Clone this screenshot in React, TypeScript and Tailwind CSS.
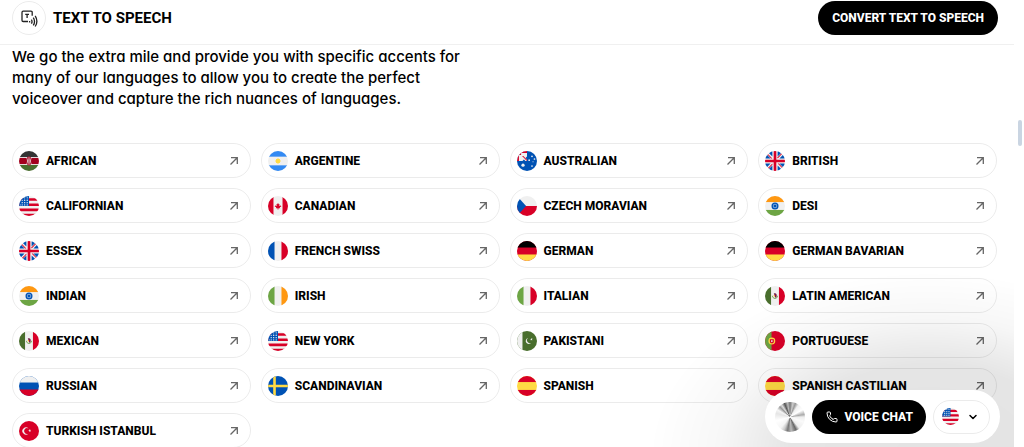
import React from 'react';
import { ChevronDown, Phone } from 'lucide-react';

type FlagCode =
    | 'ke' | 'ar' | 'au' | 'gb' | 'us' | 'ca' | 'cz' | 'in' | 'fr' | 'de' | 'ie'
    | 'it' | 'mx' | 'pk' | 'pt' | 'ru' | 'se' | 'es' | 'tr';

interface Accent {
    name: string;
    flag: FlagCode;
}

const accents: Accent[] = [
    { name: 'AFRICAN', flag: 'ke' },
    { name: 'ARGENTINE', flag: 'ar' },
    { name: 'AUSTRALIAN', flag: 'au' },
    { name: 'BRITISH', flag: 'gb' },
    { name: 'CALIFORNIAN', flag: 'us' },
    { name: 'CANADIAN', flag: 'ca' },
    { name: 'CZECH MORAVIAN', flag: 'cz' },
    { name: 'DESI', flag: 'in' },
    { name: 'ESSEX', flag: 'gb' },
    { name: 'FRENCH SWISS', flag: 'fr' },
    { name: 'GERMAN', flag: 'de' },
    { name: 'GERMAN BAVARIAN', flag: 'de' },
    { name: 'INDIAN', flag: 'in' },
    { name: 'IRISH', flag: 'ie' },
    { name: 'ITALIAN', flag: 'it' },
    { name: 'LATIN AMERICAN', flag: 'mx' },
    { name: 'MEXICAN', flag: 'mx' },
    { name: 'NEW YORK', flag: 'us' },
    { name: 'PAKISTANI', flag: 'pk' },
    { name: 'PORTUGUESE', flag: 'pt' },
    { name: 'RUSSIAN', flag: 'ru' },
    { name: 'SCANDINAVIAN', flag: 'se' },
    { name: 'SPANISH', flag: 'es' },
    { name: 'SPANISH CASTILIAN', flag: 'es' },
    { name: 'TURKISH ISTANBUL', flag: 'tr' },
];

const WHITE = '#f0f0f0';
const RED = '#d80027';
const BLUE = '#0052b4';
const GREEN = '#6da544';
const DARK_GREEN = '#496e2d';
const YELLOW = '#ffda44';
const ORANGE = '#ff9811';

const Horizontal = ({ colors, edge = 167 }: { colors: string[]; edge?: number }) => (
    <>
        <rect width="512" height="512" fill={colors[1]} />
        <rect width="512" height={edge} fill={colors[0]} />
        <rect y={512 - edge} width="512" height={edge} fill={colors[2]} />
    </>
);

const Vertical = ({ colors, edge = 167 }: { colors: string[]; edge?: number }) => (
    <>
        <rect width="512" height="512" fill={colors[1]} />
        <rect width={edge} height="512" fill={colors[0]} />
        <rect x={512 - edge} width={edge} height="512" fill={colors[2]} />
    </>
);

// One quarter of the Union Jack, turned around the centre for the other three
const UnionQuarter = ({ turn }: { turn: number }) => (
    <g transform={`rotate(${turn} 256 256)`}>
        <path d="M0 189V47l142 142zM189 0v142L47 0z" fill={BLUE} />
        <path d="M59 90l16-15 114 114h-32z" fill={RED} />
    </g>
);

const flags: Record<FlagCode, React.ReactNode> = {
    ke: (
        <>
            <rect width="512" height="512" fill={WHITE} />
            <rect width="512" height="155" fill="#333" />
            <rect y="178" width="512" height="156" fill="#a2001d" />
            <rect y="357" width="512" height="155" fill={DARK_GREEN} />
            <ellipse cx="256" cy="256" rx="62" ry="115" fill="#a2001d" />
            <path d="M256 140c-18 22-18 210 0 232 18-22 18-210 0-232z" fill={WHITE} />
            <path d="M200 185c24 40 24 102 0 142M312 185c-24 40-24 102 0 142" fill="none" stroke={WHITE} strokeWidth="20" />
        </>
    ),
    ar: (
        <>
            <Horizontal colors={['#338af3', WHITE, '#338af3']} edge={145} />
            <circle cx="256" cy="256" r="58" fill={YELLOW} />
            <path d="M256 184v144M184 256h144M205 205l102 102M307 205L205 307" stroke={YELLOW} strokeWidth="22" />
        </>
    ),
    au: (
        <>
            <rect width="512" height="512" fill={BLUE} />
            <path d="M0 0h256v256H0z" fill={WHITE} />
            <path d="M256 50H105v55H50v151H0V0h256z" fill={RED} />
            <path d="M256 140v78l-38-38zM140 256h75l-38-40z" fill={BLUE} />
            <path d="M130 130h32l94 95v31h-2z" fill={RED} />
            <circle cx="154" cy="364" r="42" fill={WHITE} />
            <circle cx="384" cy="384" r="22" fill={WHITE} />
            <circle cx="312" cy="235" r="22" fill={WHITE} />
            <circle cx="384" cy="137" r="22" fill={WHITE} />
            <circle cx="447" cy="205" r="22" fill={WHITE} />
            <circle cx="410" cy="275" r="14" fill={WHITE} />
        </>
    ),
    gb: (
        <>
            <rect width="512" height="512" fill={WHITE} />
            <UnionQuarter turn={0} />
            <UnionQuarter turn={90} />
            <UnionQuarter turn={180} />
            <UnionQuarter turn={270} />
            <path d="M222 0h68v222h222v68H290v222h-68V290H0v-68h222z" fill={RED} />
        </>
    ),
    us: (
        <>
            <rect width="512" height="512" fill={WHITE} />
            <path d="M0 56h512v66H0zM0 189h512v67H0zM0 323h512v67H0zM0 456h512v56H0z" fill={RED} />
            <rect width="256" height="256" fill={BLUE} />
            <g fill={WHITE}>
                <circle cx="210" cy="45" r="16" />
                <circle cx="145" cy="45" r="16" />
                <circle cx="210" cy="110" r="18" />
                <circle cx="145" cy="110" r="18" />
                <circle cx="82" cy="110" r="16" />
                <circle cx="210" cy="170" r="18" />
                <circle cx="145" cy="170" r="18" />
                <circle cx="82" cy="170" r="18" />
                <circle cx="210" cy="228" r="16" />
                <circle cx="145" cy="228" r="16" />
                <circle cx="82" cy="228" r="16" />
                <circle cx="28" cy="228" r="14" />
            </g>
        </>
    ),
    ca: (
        <>
            <Vertical colors={[RED, WHITE, RED]} edge={140} />
            <path
                d="M300 289l45-22-22-11v-22l-45 22 22-45h-22l-22-33-22 33h-23l23 45-45-22v22l-22 11 44 22-11 23h45v33h22v-33h45z"
                fill={RED}
            />
        </>
    ),
    cz: (
        <>
            <rect width="512" height="256" fill={WHITE} />
            <rect y="256" width="512" height="256" fill={RED} />
            <path d="M0 0l233 256L0 512z" fill={BLUE} />
        </>
    ),
    in: (
        <>
            <Horizontal colors={[ORANGE, WHITE, GREEN]} edge={155} />
            <circle cx="256" cy="256" r="90" fill={BLUE} />
            <circle cx="256" cy="256" r="58" fill="#7ba6da" />
            <circle cx="256" cy="256" r="34" fill={BLUE} />
        </>
    ),
    fr: <Vertical colors={[BLUE, WHITE, RED]} />,
    de: <Horizontal colors={['#000', RED, YELLOW]} />,
    ie: <Vertical colors={[GREEN, WHITE, ORANGE]} />,
    it: <Vertical colors={[GREEN, WHITE, RED]} />,
    mx: (
        <>
            <Vertical colors={[DARK_GREEN, WHITE, RED]} edge={155} />
            <path d="M190 250c0 90 132 90 132 0" fill="none" stroke={GREEN} strokeWidth="24" />
            <path d="M225 190c60-20 90 20 70 90l-35 20-10-50z" fill="#751a46" />
            <circle cx="240" cy="250" r="18" fill={ORANGE} />
        </>
    ),
    pk: (
        <>
            <rect width="512" height="512" fill={DARK_GREEN} />
            <rect width="140" height="512" fill={WHITE} />
            <path d="M365 300a78 78 0 1 1-75-122 62 62 0 1 0 75 122z" fill={WHITE} />
            <path d="M360 178l14 22 26-5-17 20 13 23-24-10-19 18 3-26-23-13 26-5z" fill={WHITE} />
        </>
    ),
    pt: (
        <>
            <rect width="512" height="512" fill={RED} />
            <rect width="167" height="512" fill={GREEN} />
            <circle cx="175" cy="256" r="88" fill={YELLOW} />
            <path d="M125 212h100v55c0 66-100 66-100 0z" fill={RED} />
            <path d="M155 235h40v35c0 26-40 26-40 0z" fill={WHITE} />
        </>
    ),
    ru: <Horizontal colors={[WHITE, BLUE, RED]} />,
    se: (
        <>
            <rect width="512" height="512" fill={BLUE} />
            <path d="M133 0h67v222h312v68H200v222h-67V290H0v-68h133z" fill={YELLOW} />
        </>
    ),
    es: <Horizontal colors={[RED, YELLOW, RED]} edge={155} />,
    tr: (
        <>
            <rect width="512" height="512" fill={RED} />
            <path d="M245 320a92 92 0 1 1 0-128 75 75 0 1 0 0 128z" fill={WHITE} />
            <path d="M262 206l18 25 29-9-18 25 18 25-29-9-18 24v-30l-29-10 29-10z" fill={WHITE} />
        </>
    ),
};

const Flag = ({ code, className }: { code: FlagCode; className: string }) => (
    <svg viewBox="0 0 512 512" className={`${className} shrink-0 overflow-hidden rounded-full`} aria-hidden="true">
        {flags[code]}
    </svg>
);

const SpeechIcon = () => (
    <svg viewBox="0 0 17 17" className="size-[17px]" fill="none" stroke="#222" strokeWidth="1.3" aria-hidden="true">
        <path d="M11.2 5.8V2.4c0-.8-.4-1.2-1.2-1.2H2.2C1.4 1.2 1 1.6 1 2.4v7.9c0 .8.4 1.2 1.2 1.2H7" />
        <path d="M4.2 4.4H8M6.1 4.4V8" />
        <path d="M8.6 11v1.4M10.4 9.6c.8 1.3.8 2.8 0 4.1M12.3 7.6c1.5 2.4 1.5 5.4 0 7.8M14.2 5.9c2.1 3.4 2.1 7.4 0 10.6" />
    </svg>
);

const ArrowIcon = () => (
    <svg viewBox="0 0 8 8" className="size-2 shrink-0" fill="none" stroke="#666" strokeWidth="1.3" aria-hidden="true">
        <path d="M.5 7.5l6.7-6.7M1 .7h6.3V7" />
    </svg>
);

const AccentLink: React.FC<{ accent: Accent }> = ({ accent }) => (
    <a
        href="#"
        className="flex h-[35px] items-center gap-[7px] rounded-full border border-black/8 pr-3 pl-1.5 hover:bg-gray-50"
    >
        <Flag code={accent.flag} className="size-5" />
        <span className="flex-1 text-xs font-extrabold whitespace-nowrap">{accent.name}</span>
        <ArrowIcon />
    </a>
);

const VoiceChatBar = () => (
    <div className="fixed right-6 bottom-1 flex h-[53px] items-center gap-[7px] rounded-full bg-white px-2.5">
        <div className="size-[30px] rounded-full bg-[conic-gradient(#777_0deg,#ccc_12deg,#999_22deg,#f0f0f0_35deg,#fff_60deg,#aaa_80deg,#eee_90deg,#fafafa_110deg,#eee_140deg,#666_155deg,#bbb_175deg,#777_190deg,#ccc_205deg,#f5f5f5_220deg,#fff_255deg,#e5e5e5_285deg,#f5f5f5_300deg,#999_315deg,#ddd_325deg,#555_338deg,#bbb_350deg,#777_360deg)]" />
        <button className="flex h-[34px] items-center gap-1.5 rounded-full bg-black pr-[13px] pl-3.5 text-xs font-extrabold text-white">
            <Phone className="size-3" strokeWidth={2} />
            VOICE CHAT
        </button>
        <button
            aria-label="Language"
            className="flex h-[34px] w-[57px] items-center justify-between rounded-full border border-black/8 pr-2.5 pl-2"
        >
            <Flag code="us" className="size-[17px]" />
            <ChevronDown className="size-3" strokeWidth={3} />
        </button>
    </div>
);

const App = () => {
    return (
        <div className="flex h-screen overflow-hidden bg-white font-['Roboto',sans-serif] text-black">
            <div className="min-w-0 flex-1">
                <header className="flex items-center justify-between border-b border-[#f0f0f0] pt-px pr-4 pb-[9px] pl-3">
                    <div className="flex items-center gap-[7px]">
                        <div className="flex size-[34px] items-center justify-center rounded-full border border-black/8">
                            <SpeechIcon />
                        </div>
                        <h1 className="text-[15px] font-bold">TEXT TO SPEECH</h1>
                    </div>
                    <button className="h-[34px] rounded-full bg-black px-3.5 text-xs font-extrabold text-white">
                        CONVERT TEXT TO SPEECH
                    </button>
                </header>

                <main className="pt-px pr-[17px] pl-3">
                    <p className="max-w-[470px] font-['Inter',sans-serif] text-[15px] leading-[21px] font-medium [font-feature-settings:'cv11']">
                        We go the extra mile and provide you with specific accents for many of our languages to allow
                        you to create the perfect voiceover and capture the rich nuances of languages.
                    </p>
                    <div className="mt-[34px] grid grid-cols-4 gap-2.5">
                        {accents.map((accent) => (
                            <AccentLink key={accent.name} accent={accent} />
                        ))}
                    </div>
                </main>
            </div>

            {/* scroll gutter */}
            <div className="w-2.5 pt-[120px] pl-1">
                <div className="h-[26px] w-1 rounded-full bg-slate-300" />
            </div>

            <div className="pointer-events-none fixed right-2.5 bottom-0 h-[190px] w-[370px] bg-[radial-gradient(280px_185px_at_77%_105%,rgba(0,0,0,0.11)_0%,rgba(0,0,0,0.1)_50%,rgba(0,0,0,0.03)_75%,transparent_100%)]" />
            <VoiceChatBar />
        </div>
    );
};

export default App;
